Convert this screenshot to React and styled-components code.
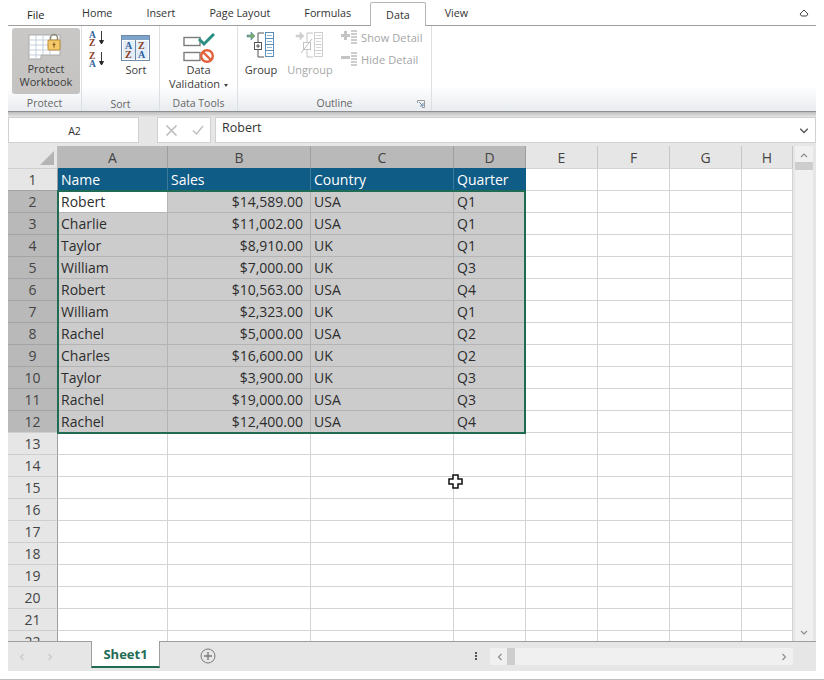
import React from "react";
import styled, { createGlobalStyle } from "styled-components";

const COLUMNS = ["A", "B", "C", "D", "E", "F", "G", "H"];
const ROWS = [
  ["Robert", "$14,589.00", "USA", "Q1"],
  ["Charlie", "$11,002.00", "USA", "Q1"],
  ["Taylor", "$8,910.00", "UK", "Q1"],
  ["William", "$7,000.00", "UK", "Q3"],
  ["Robert", "$10,563.00", "USA", "Q4"],
  ["William", "$2,323.00", "UK", "Q1"],
  ["Rachel", "$5,000.00", "USA", "Q2"],
  ["Charles", "$16,600.00", "UK", "Q2"],
  ["Taylor", "$3,900.00", "UK", "Q3"],
  ["Rachel", "$19,000.00", "USA", "Q3"],
  ["Rachel", "$12,400.00", "USA", "Q4"],
];
const EMPTY_ROWS = [13, 14, 15, 16, 17, 18, 19, 20, 21, 22];
const TABS = ["Home", "Insert", "Page Layout", "Formulas", "Data", "View"];

const GlobalStyle = createGlobalStyle`
  html, body {
    margin: 0;
    background: #ffffff;
  }
  body {
    font-family: "Open Sans", "Noto Sans", sans-serif;
    color: #333333;
  }
`;

const Page = styled.div`
  width: 824px;
  height: 680px;
  overflow: hidden;
  padding-left: 8px;
  box-sizing: border-box;
  position: relative;
`;

const Window = styled.div`
  width: 808px;
  display: flex;
  flex-direction: column;
`;

const TabBar = styled.div`
  height: 26px;
  display: flex;
  align-items: flex-end;
  border-bottom: 1px solid #9d9d9d;
  box-sizing: border-box;
  position: relative;
`;

const FileTab = styled.div`
  font-size: 11px;
  color: #222222;
  margin-left: 19px;
  width: 38px;
  height: 24px;
  line-height: 27px;
`;

const Tab = styled.div`
  font-size: 10.75px;
  color: #333333;
  padding: 0 ${(p) => (p.$active ? 15 : 17)}px;
  height: 24px;
  line-height: 24px;
  box-sizing: border-box;
  ${(p) =>
    p.$active &&
    `
    background: #ffffff;
    border: 1px solid #b4b4b4;
    border-bottom: none;
    border-radius: 2px 2px 0 0;
    margin: 0 2px -1px 2px;
    z-index: 1;
  `}
`;

const Collapse = styled.svg`
  margin-left: auto;
  margin-right: 7px;
  margin-bottom: 8px;
`;

const Ribbon = styled.div`
  height: 86px;
  display: flex;
  background: linear-gradient(#ffffff 0, #ffffff 60px, #e9ecf0 84px);
  border-bottom: 1px solid #8f8f8f;
  box-sizing: border-box;
`;

const Group = styled.div`
  width: ${(p) => p.$width}px;
  display: flex;
  flex-direction: column;
  border-right: 1px solid #dcdfe3;
  box-sizing: border-box;
  position: relative;
`;

const GroupBody = styled.div`
  flex: 1;
  display: flex;
  padding: ${(p) => p.$pad || "0"};
`;

const GroupLabel = styled.div`
  height: 14px;
  font-size: 10.5px;
  line-height: 13px;
  text-align: center;
  color: #666666;
`;

const LargeButton = styled.div`
  width: ${(p) => p.$width || 68}px;
  height: 66px;
  border-radius: 3px;
  margin-top: 2px;
  margin-left: ${(p) => p.$shift || 0}px;
  display: flex;
  flex-direction: column;
  align-items: center;
  background: ${(p) => (p.$pressed ? "linear-gradient(#c9c8c6, #c4c3c1)" : "transparent")};
  color: ${(p) => (p.$disabled ? "#a8a8a8" : "#3c3c3c")};
  font-size: 11px;
  line-height: ${(p) => p.$leading || 14}px;
  text-align: center;
`;

const IconWrap = styled.div`
  height: ${(p) => p.$height}px;
  padding-top: ${(p) => p.$top || 0}px;
  box-sizing: border-box;
  display: flex;
  align-items: flex-start;
  justify-content: center;
`;

const SmallStack = styled.div`
  display: flex;
  flex-direction: column;
  gap: 8px;
  padding: 4px 0 0 2px;
`;

const SortStack = styled.div`
  display: flex;
  flex-direction: column;
  gap: 1px;
`;

const SmallRow = styled.div`
  display: flex;
  align-items: center;
  gap: 2px;
  font-size: 11px;
  letter-spacing: 0.1px;
  color: #a6a6a6;
  height: 14px;
`;

const Caret = styled.span`
  display: inline-block;
  width: 0;
  height: 0;
  margin-left: 4px;
  vertical-align: middle;
  border-left: 2.5px solid transparent;
  border-right: 2.5px solid transparent;
  border-top: 3px solid #444444;
`;

const DialogMark = styled.svg`
  position: absolute;
  right: 6px;
  bottom: 3px;
`;

const FormulaBand = styled.div`
  height: 34px;
  box-sizing: border-box;
  padding-top: 5px;
  background: linear-gradient(#bcbcbc 0, #e6e6e6 5px, #e6e6e6 100%);
  display: flex;
`;

const FieldBox = styled.div`
  height: 26px;
  background: #ffffff;
  border: 1px solid #d0d0d0;
  box-sizing: border-box;
  display: flex;
  align-items: center;
  font-size: ${(p) => p.$size || 12}px;
  color: #333333;
`;

const NameBox = styled(FieldBox)`
  width: 131px;
  justify-content: center;
  font-size: 10.5px;
  padding: 2px 0 0 2px;
`;

const ActionBox = styled(FieldBox)`
  width: 54px;
  margin: 0 4px 0 18px;
  justify-content: center;
  gap: 14px;
`;

const FormulaBox = styled(FieldBox)`
  flex: 1;
  padding: 0 6px;
  justify-content: space-between;
  & > span {
    margin-bottom: 5px;
  }
`;

const SheetArea = styled.div`
  display: flex;
  background: #e6e6e6;
  height: 495px;
`;

const SheetGrid = styled.div`
  width: 785px;
  height: 495px;
  overflow: hidden;
  display: grid;
  grid-template-columns: 50px 110px 143px 143px 72px 72px 72px 72px 51px;
  grid-auto-rows: 22px;
  position: relative;
  background: #ffffff;
`;

const Corner = styled.div`
  background: #e6e6e6;
  position: relative;
  border-right: 1px solid #bdbdbd;
  box-sizing: border-box;
  &::after {
    content: "";
    position: absolute;
    right: 3px;
    bottom: 3px;
    border-style: solid;
    border-width: 0 0 14px 14px;
    border-color: transparent transparent #b4b4b4 transparent;
  }
`;

const ColHead = styled.div`
  background: ${(p) => (p.$selected ? "#b9b9b9" : "#e6e6e6")};
  border-right: 1px solid ${(p) => (p.$selected ? "#9e9e9e" : "#c6c6c6")};
  box-sizing: border-box;
  display: flex;
  align-items: center;
  justify-content: center;
  font-size: 14px;
  color: #444444;
`;

const RowHead = styled.div`
  background: ${(p) => (p.$selected ? "#b9b9b9" : "#e6e6e6")};
  border-right: 1px solid #9e9e9e;
  border-top: 1px solid ${(p) => (p.$selected ? "#a4a4a4" : "#cfcfcf")};
  box-sizing: border-box;
  display: flex;
  align-items: center;
  justify-content: center;
  font-size: 14px;
  color: #444444;
`;

const Cell = styled.div`
  border-right: 1px solid ${(p) => (p.$selected ? "#b4b4b4" : "#d4d4d4")};
  border-top: 1px solid ${(p) => (p.$selected ? "#b4b4b4" : "#d4d4d4")};
  background: ${(p) => (p.$active ? "#ffffff" : p.$selected ? "#cccccc" : "#ffffff")};
  box-sizing: border-box;
  padding: 0 7px 0 3px;
  display: flex;
  align-items: center;
  justify-content: ${(p) => (p.$right ? "flex-end" : "flex-start")};
  font-size: 14px;
  color: #2d2d2d;
  white-space: nowrap;
`;

const HeaderCell = styled.div`
  background: #0f5c86;
  border-right: 1px solid ${(p) => (p.$last ? "#0f5c86" : "#3b7a9c")};
  box-sizing: border-box;
  padding: 1px 3px 0;
  display: flex;
  align-items: center;
  font-size: 14px;
  color: #ffffff;
`;

const SelectionBox = styled.div`
  position: absolute;
  left: 49px;
  top: 44px;
  width: 469px;
  height: 244px;
  box-sizing: border-box;
  border: 2px solid #1f6b54;
  pointer-events: none;
  z-index: 2;
`;

const VScroll = styled.div`
  width: 18px;
  margin-left: 2px;
  background: #f0f0f0;
  display: flex;
  flex-direction: column;
  align-items: center;
  height: 495px;
  padding-top: 5px;
  box-sizing: border-box;
`;

const VThumb = styled.div`
  width: 18px;
  height: 8px;
  background: #cdcdcd;
  margin-top: 3px;
`;

const BottomArrow = styled.div`
  margin-top: auto;
  margin-bottom: 5px;
  display: flex;
`;

const SheetBar = styled.div`
  height: 30px;
  background: #e6e6e6;
  border-top: 1px solid #9e9e9e;
  box-sizing: border-box;
  display: flex;
  align-items: flex-start;
  width: 808px;
`;

const SheetNav = styled.div`
  width: 83px;
  height: 29px;
  display: flex;
  align-items: center;
  justify-content: center;
  gap: 20px;
  padding-right: 27px;
  box-sizing: border-box;
`;

const SheetTab = styled.div`
  width: 67px;
  height: 25px;
  background: #ffffff;
  border-left: 1px solid #9e9e9e;
  border-right: 1px solid #9e9e9e;
  border-bottom: 2px solid #1f6b54;
  margin-top: -1px;
  display: flex;
  align-items: center;
  justify-content: center;
  font-size: 13px;
  font-weight: 700;
  color: #1f6b54;
`;

const AddSheet = styled.svg`
  margin: 6px 0 0 40px;
`;

const Dots = styled.div`
  margin-left: 259px;
  margin-top: 10px;
  display: flex;
  flex-direction: column;
  gap: 1px;
  & > i {
    display: block;
    width: 2px;
    height: 2px;
    background: #555555;
  }
`;

const HScroll = styled.div`
  margin-left: 13px;
  margin-top: 6px;
  width: 303px;
  height: 17px;
  background: #f0f0f0;
  display: flex;
  align-items: center;
  padding: 0 5px 0 6px;
  box-sizing: border-box;
`;

const HThumb = styled.div`
  width: 8px;
  height: 17px;
  background: #cdcdcd;
  margin-left: 3px;
  margin-right: auto;
`;

const BottomRule = styled.div`
  position: absolute;
  left: 0;
  right: 0;
  bottom: 0;
  height: 1px;
  background: #bdbdbd;
`;

const Pointer = styled.svg`
  position: absolute;
  left: 448px;
  top: 474px;
  z-index: 3;
`;

const ProtectIcon = () => (
  <svg width="36" height="28" viewBox="0 0 36 28">
    <path d="M1 2h31v20H13v4H1z" fill="#fff" stroke="#a9a9a9" />
    <path d="M1 7h31M1 12h31M1 17h31M1 22h12M8 2v24M15 2v20M22 2v20" stroke="#c3cfda" fill="none" />
    <path d="M22.5 8V5a3.5 3.5 0 0 1 7 0v3" fill="none" stroke="#8f8a7a" strokeWidth="1.5" />
    <rect x="20" y="7" width="12" height="10" rx="1" fill="#f5c96a" stroke="#b98a33" />
    <path d="M26 9.5v5M24.5 11.5h3" stroke="#7a5a1a" strokeWidth="1.1" />
  </svg>
);

const SortLetters = ({ top, bottom }) => (
  <svg width="20" height="20" viewBox="0 0 20 20">
    <text x="0" y="8" fontFamily="Liberation Serif" fontWeight="700" fontSize="9.5" fill={top === "A" ? "#2f5f9e" : "#8c3a22"}>{top}</text>
    <text x="0" y="15.5" fontFamily="Liberation Serif" fontWeight="700" fontSize="9.5" fill={bottom === "A" ? "#2f5f9e" : "#8c3a22"}>{bottom}</text>
    <path d="M12.5 1v12M10.5 10.5l2 3.5 2-3.5z" stroke="#222" fill="#222" strokeWidth="0.9" />
  </svg>
);

const SortIcon = () => (
  <svg width="30" height="28" viewBox="0 0 30 28">
    <rect x="0.5" y="0.5" width="28" height="25" fill="#fff" stroke="#6f8aa6" />
    <rect x="1" y="1" width="27" height="4" fill="#7ea3c9" />
    <rect x="2" y="6" width="12" height="18" fill="#e3edf7" />
    <rect x="15" y="6" width="12" height="18" fill="#e3edf7" />
    <path d="M14.5 5v21" stroke="#6f8aa6" />
    <text x="4" y="14" fontFamily="Liberation Serif" fontWeight="700" fontSize="10" fill="#2f5f9e">A</text>
    <text x="4" y="23" fontFamily="Liberation Serif" fontWeight="700" fontSize="10" fill="#8c3a22">Z</text>
    <text x="17" y="14" fontFamily="Liberation Serif" fontWeight="700" fontSize="10" fill="#8c3a22">Z</text>
    <text x="17" y="23" fontFamily="Liberation Serif" fontWeight="700" fontSize="10" fill="#2f5f9e">A</text>
  </svg>
);

const ValidationIcon = () => (
  <svg width="32" height="30" viewBox="0 0 32 30">
    <rect x="1" y="4.5" width="16" height="8" fill="#fff" stroke="#7c7c7c" strokeWidth="1.4" />
    <rect x="1" y="19.5" width="16" height="8" fill="#fff" stroke="#7c7c7c" strokeWidth="1.4" />
    <path d="M16 6l5 5 10-10" fill="none" stroke="#2c8f86" strokeWidth="3" />
    <circle cx="24" cy="23" r="5.8" fill="#fff" stroke="#e2603a" strokeWidth="2.4" />
    <path d="M20 19l8 8" stroke="#e2603a" strokeWidth="2.4" />
  </svg>
);

const GroupIcon = ({ muted }) => (
  <svg width="32" height="28" viewBox="0 0 32 28">
    <path d="M2 4h4V1l4 4-4 4V6H2z" fill={muted ? "#cfcfcf" : "#7fb06a"} stroke={muted ? "#cfcfcf" : "#4f7fa8"} strokeWidth="0.6" />
    <path d="M19 2h-6v24h6" fill="none" stroke={muted ? "#c4c4c4" : "#555"} />
    <rect x="9.5" y="11.5" width="7" height="7" fill="#fff" stroke={muted ? "#c4c4c4" : "#555"} />
    {muted ? (
      <path d="M7 22l11-14" stroke="#bdbdbd" />
    ) : (
      <path d="M13 13v4M11 15h4" stroke="#555" />
    )}
    <rect x="20.5" y="1.5" width="8" height="24" fill="#fff" stroke={muted ? "#cfcfcf" : "#5b8db8"} />
    <path d="M20 7.5h9M20 13.5h9M20 19.5h9" stroke={muted ? "#cfcfcf" : "#5b8db8"} />
    <path d="M22 4.5h5M22 10.5h5M22 16.5h5M22 22.5h5" stroke={muted ? "#d8d8d8" : "#8db7d8"} />
  </svg>
);

const SmallDetailIcon = ({ plus }) => (
  <svg width="18" height="14" viewBox="0 0 18 14">
    {plus ? (
      <path d="M3 1h3v3h3v3H6v3H3V7H0V4h3z" fill="#c4c4c4" />
    ) : (
      <rect x="0" y="4" width="9" height="3" fill="#c4c4c4" />
    )}
    <path d="M10 1h6M10 4h6M10 7h6M10 10h6M10 13h6" stroke="#9c9c9c" />
  </svg>
);

const Chevron = ({ dir, color = "#8a8a8a", size = 8 }) => {
  const paths = {
    up: "M1 6l3-3 3 3",
    down: "M1 3l3 3 3-3",
    left: "M5.5 1L2.5 4l3 3",
    right: "M2.5 1l3 3-3 3",
  };
  return (
    <svg width={size} height={size} viewBox="0 0 8 8">
      <path d={paths[dir]} fill="none" stroke={color} strokeWidth="1.1" />
    </svg>
  );
};

export default function App() {
  return (
    <Page>
      <GlobalStyle />
      <Window>
        <TabBar>
          <FileTab>File</FileTab>
          {TABS.map((t) => (
            <Tab key={t} $active={t === "Data"}>{t}</Tab>
          ))}
          <Collapse width="10" height="8" viewBox="0 0 10 8">
            <path d="M1 5l4-4 4 4-1.5 2h-5z" fill="none" stroke="#444" />
          </Collapse>
        </TabBar>

        <Ribbon>
          <Group $width={74}>
            <GroupBody $pad="0 0 0 4px">
              <LargeButton $pressed $leading={13}>
                <IconWrap $height={34} $top={5}><ProtectIcon /></IconWrap>
                <div>Protect</div>
                <div>Workbook</div>
              </LargeButton>
            </GroupBody>
            <GroupLabel>Protect</GroupLabel>
          </Group>

          <Group $width={78}>
            <GroupBody $pad="4px 0 0 7px">
              <SortStack>
                <SortLetters top="A" bottom="Z" />
                <SortLetters top="Z" bottom="A" />
              </SortStack>
              <LargeButton $width={44} $shift={5}>
                <IconWrap $height={31} $top={3}><SortIcon /></IconWrap>
                <div>Sort</div>
              </LargeButton>
            </GroupBody>
            <GroupLabel>Sort</GroupLabel>
          </Group>

          <Group $width={78}>
            <GroupBody>
              <LargeButton $width={78}>
                <IconWrap $height={35} $top={5}><ValidationIcon /></IconWrap>
                <div>Data</div>
                <div>Validation<Caret /></div>
              </LargeButton>
            </GroupBody>
            <GroupLabel>Data Tools</GroupLabel>
          </Group>

          <Group $width={194}>
            <GroupBody $pad="0 0 0 3px">
              <LargeButton $width={40}>
                <IconWrap $height={35} $top={3}><GroupIcon /></IconWrap>
                <div>Group</div>
              </LargeButton>
              <LargeButton $width={58} $disabled>
                <IconWrap $height={35} $top={3}><GroupIcon muted /></IconWrap>
                <div>Ungroup</div>
              </LargeButton>
              <SmallStack>
                <SmallRow><SmallDetailIcon plus />Show Detail</SmallRow>
                <SmallRow><SmallDetailIcon />Hide Detail</SmallRow>
              </SmallStack>
            </GroupBody>
            <GroupLabel>Outline</GroupLabel>
            <DialogMark width="8" height="8" viewBox="0 0 8 8">
              <path d="M0.5 3V0.5H7.5V7.5H5" fill="none" stroke="#9a9a9a" />
              <path d="M2 2l4 4M3 6h3V3" fill="none" stroke="#6a8fb0" />
            </DialogMark>
          </Group>
        </Ribbon>

        <FormulaBand>
          <NameBox>A2</NameBox>
          <ActionBox>
            <svg width="13" height="11" viewBox="0 0 13 11">
              <path d="M1.5 0.5l10 10M11.5 0.5l-10 10" stroke="#bdbdbd" strokeWidth="1.6" />
            </svg>
            <svg width="12" height="10" viewBox="0 0 12 10">
              <path d="M1 5.5l3.5 3.5L11 1" fill="none" stroke="#bdbdbd" strokeWidth="1.3" />
            </svg>
          </ActionBox>
          <FormulaBox $size={12.5}>
            <span>Robert</span>
            <Chevron dir="down" color="#555" size={10} />
          </FormulaBox>
        </FormulaBand>

        <SheetArea>
          <SheetGrid>
            <Corner />
            {COLUMNS.map((c, i) => (
              <ColHead key={c} $selected={i < 4}>{c}</ColHead>
            ))}

            <RowHead>1</RowHead>
            <HeaderCell>Name</HeaderCell>
            <HeaderCell>Sales</HeaderCell>
            <HeaderCell>Country</HeaderCell>
            <HeaderCell $last>Quarter</HeaderCell>
            <Cell /><Cell /><Cell /><Cell />

            {ROWS.map((row, i) => (
              <React.Fragment key={i}>
                <RowHead $selected>{i + 2}</RowHead>
                {row.map((v, j) => (
                  <Cell key={j} $selected $active={i === 0 && j === 0} $right={j === 1}>{v}</Cell>
                ))}
                <Cell /><Cell /><Cell /><Cell />
              </React.Fragment>
            ))}

            {EMPTY_ROWS.map((n) => (
              <React.Fragment key={n}>
                <RowHead>{n}</RowHead>
                <Cell /><Cell /><Cell /><Cell /><Cell /><Cell /><Cell /><Cell />
              </React.Fragment>
            ))}

            <SelectionBox />
          </SheetGrid>
          <VScroll>
            <Chevron dir="up" />
            <VThumb />
            <BottomArrow><Chevron dir="down" /></BottomArrow>
          </VScroll>
        </SheetArea>

        <SheetBar>
          <SheetNav>
            <Chevron dir="left" color="#c6c6c6" />
            <Chevron dir="right" color="#c6c6c6" />
          </SheetNav>
          <SheetTab>Sheet1</SheetTab>
          <AddSheet width="16" height="16" viewBox="0 0 16 16">
            <circle cx="8" cy="8" r="7" fill="none" stroke="#7a7a7a" />
            <path d="M8 4v8M4 8h8" stroke="#7a7a7a" strokeWidth="1.4" />
          </AddSheet>
          <Dots><i /><i /><i /></Dots>
          <HScroll>
            <Chevron dir="left" />
            <HThumb />
            <Chevron dir="right" />
          </HScroll>
        </SheetBar>
      </Window>
      <Pointer width="15" height="15" viewBox="0 0 15 15">
        <path d="M5 1h5v4h4v5h-4v4H5v-4H1V5h4z" fill="#fff" stroke="#111" strokeWidth="1.5" />
      </Pointer>
      <BottomRule />
    </Page>
  );
}
